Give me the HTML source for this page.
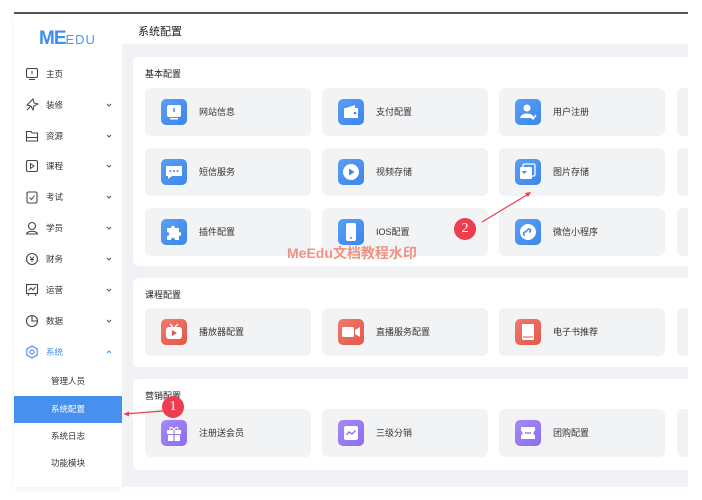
<!DOCTYPE html>
<html><head><meta charset="utf-8"><style>
*{margin:0;padding:0;box-sizing:border-box}
body{width:702px;height:500px;background:#fff;position:relative;overflow:hidden;font-family:"Liberation Sans","Noto Sans CJK SC",sans-serif;color:#333}
.topline{position:absolute;left:14px;top:12px;width:674px;height:2px;background:#555}
.side{position:absolute;left:14px;top:14px;width:108px;height:473px;background:#fff;box-shadow:0 2px 6px rgba(0,0,0,.06)}
.logo{position:absolute;left:39px;top:28px;font-size:19px;font-weight:bold;color:#3d8ef0;letter-spacing:-1px}
.logo small{font-size:13px;font-weight:normal;letter-spacing:1px;color:#4b9af5}
.mi{position:absolute;left:14px;width:108px;font-size:8.5px;color:#333;height:20px;line-height:20px}
.mi svg.ic{position:absolute;left:11px;top:3px}
.mi .t{position:absolute;left:32px}
.mi svg.ch{position:absolute;left:92px;top:8px}
.sub{position:absolute;left:14px;width:108px;text-align:center;font-size:8.5px;color:#333;height:27px;line-height:27px}
.sub.on{background:#4790ee;color:#fff}
.main{position:absolute;left:122px;top:14px;width:566px;height:473px;background:#f1f2f6}
.hdr{position:absolute;left:122px;top:14px;width:566px;height:30px;background:#fff}
.hdr span{position:absolute;left:16px;top:9px;font-size:11px;color:#222}
.panel{position:absolute;left:133px;width:560px;background:#fff;border-radius:5px}
.pt{position:absolute;left:12px;font-size:9px;color:#222}
.card{position:absolute;width:166px;height:48px;background:#f2f3f5;border-radius:6px}
.card .i{position:absolute;left:16px;top:11px;width:26px;height:26px;border-radius:5px}
.card .i svg{position:absolute;left:0;top:0}
.card .l{position:absolute;left:54px;top:17px;font-size:9px;color:#333}
.b{background:linear-gradient(135deg,#5a9ff5,#3d86ea)}
.r{background:linear-gradient(135deg,#f07a6c,#e2584a)}
.p{background:linear-gradient(135deg,#a58af6,#8d6cf0)}
.circ{position:absolute;width:22px;height:22px;border-radius:50%;background:#ee3d4e;color:#fff;font-family:"Liberation Serif",serif;font-size:14px;text-align:center;line-height:22px}
.wm{position:absolute;left:287px;top:243px;font-size:14px;font-weight:bold;color:#f08070;opacity:.85}
</style></head><body>
<div class="topline"></div>
<div class="side"></div>
<div class="logo">ME<small>EDU</small></div>

<div class="mi" style="top:64px"><svg class="ic" width="14" height="14"><rect x="1.5" y="1.5" width="11" height="9" rx="1.5" fill="none" stroke="#444" stroke-width="1.1"/><line x1="4" y1="12.5" x2="10" y2="12.5" stroke="#444" stroke-width="1.1"/><line x1="7" y1="4" x2="7" y2="7" stroke="#444" stroke-width="1.1"/></svg><span class="t">主页</span></div>
<div class="mi" style="top:95px"><svg class="ic" width="14" height="14"><path d="M2 12 L6 8 M5 4 L8 1 L9 5 L13 6 L9 8 L8 12 L6 8 L2 7Z" fill="none" stroke="#444" stroke-width="1"/></svg><span class="t">装修</span><svg class="ch" width="6" height="4"><path d="M1 1L3 3L5 1" fill="none" stroke="#555"/></svg></div>
<div class="mi" style="top:126px"><svg class="ic" width="14" height="14"><path d="M1.5 2.5H6L7 4H12.5V12H1.5Z M1.5 8.5H12.5" fill="none" stroke="#444" stroke-width="1.1"/></svg><span class="t">资源</span><svg class="ch" width="6" height="4"><path d="M1 1L3 3L5 1" fill="none" stroke="#555"/></svg></div>
<div class="mi" style="top:156px"><svg class="ic" width="14" height="14"><rect x="1.5" y="1.5" width="11" height="11" rx="1.5" fill="none" stroke="#444" stroke-width="1.1"/><path d="M5.5 4.5L9 7L5.5 9.5Z" fill="none" stroke="#444"/></svg><span class="t">课程</span><svg class="ch" width="6" height="4"><path d="M1 1L3 3L5 1" fill="none" stroke="#555"/></svg></div>
<div class="mi" style="top:187px"><svg class="ic" width="14" height="14"><rect x="2" y="2" width="10" height="11" rx="1.5" fill="none" stroke="#444" stroke-width="1.1"/><path d="M4.5 7.5L6.5 9.5L9.5 5.5" fill="none" stroke="#444"/></svg><span class="t">考试</span><svg class="ch" width="6" height="4"><path d="M1 1L3 3L5 1" fill="none" stroke="#555"/></svg></div>
<div class="mi" style="top:218px"><svg class="ic" width="14" height="14"><circle cx="7" cy="5" r="3.5" fill="none" stroke="#444" stroke-width="1.1"/><path d="M1.5 13C2 9.5 12 9.5 12.5 13Z" fill="none" stroke="#444" stroke-width="1.1"/></svg><span class="t">学员</span><svg class="ch" width="6" height="4"><path d="M1 1L3 3L5 1" fill="none" stroke="#555"/></svg></div>
<div class="mi" style="top:249px"><svg class="ic" width="14" height="14"><circle cx="7" cy="7" r="5.5" fill="none" stroke="#444" stroke-width="1.1"/><path d="M5 4.5L7 7L9 4.5M7 7V10M5 7.5H9" fill="none" stroke="#444" stroke-width=".9"/></svg><span class="t">财务</span><svg class="ch" width="6" height="4"><path d="M1 1L3 3L5 1" fill="none" stroke="#555"/></svg></div>
<div class="mi" style="top:280px"><svg class="ic" width="14" height="14"><rect x="1.5" y="1.5" width="11" height="9" fill="none" stroke="#444" stroke-width="1.1"/><path d="M3.5 7.5L6 5L8 7L10.5 4M3 13L4 10.5M11 13L10 10.5" fill="none" stroke="#444"/></svg><span class="t">运营</span><svg class="ch" width="6" height="4"><path d="M1 1L3 3L5 1" fill="none" stroke="#555"/></svg></div>
<div class="mi" style="top:311px"><svg class="ic" width="14" height="14"><circle cx="7" cy="7" r="5.5" fill="none" stroke="#444" stroke-width="1.1"/><path d="M7 1.5V7H12.5" fill="none" stroke="#444" stroke-width="1.1"/></svg><span class="t">数据</span><svg class="ch" width="6" height="4"><path d="M1 1L3 3L5 1" fill="none" stroke="#555"/></svg></div>
<div class="mi" style="top:342px;color:#3d8ef0"><svg class="ic" width="14" height="14"><path d="M7 1L12.2 4V10L7 13L1.8 10V4Z" fill="none" stroke="#3d8ef0" stroke-width="1.1"/><circle cx="7" cy="7" r="2" fill="none" stroke="#3d8ef0" stroke-width="1.1"/></svg><span class="t">系统</span><svg class="ch" width="6" height="4"><path d="M1 3L3 1L5 3" fill="none" stroke="#3d8ef0"/></svg></div>
<div class="sub" style="top:368px">管理人员</div>
<div class="sub on" style="top:396px">系统配置</div>
<div class="sub" style="top:423px">系统日志</div>
<div class="sub" style="top:450px">功能模块</div>

<div class="main"></div>
<div class="hdr"><span>系统配置</span></div>

<div class="panel" style="top:57px;height:209px">
 <div class="pt" style="top:10px">基本配置</div>
 <div class="card" style="left:12px;top:31px"><div class="i b"><svg width="26" height="26"><rect x="6" y="6" width="14" height="12" rx="2" fill="#fff"/><rect x="9" y="19" width="8" height="1.5" fill="#fff"/><rect x="12.3" y="9" width="1.4" height="4" fill="#3d86ea"/></svg></div><div class="l">网站信息</div></div>
 <div class="card" style="left:189px;top:31px"><div class="i b"><svg width="26" height="26"><path d="M6 9H20V19H6Z M8 9L17 6V9" fill="#fff"/><circle cx="17" cy="14" r="1.3" fill="#3d86ea"/></svg></div><div class="l">支付配置</div></div>
 <div class="card" style="left:366px;top:31px"><div class="i b"><svg width="26" height="26"><circle cx="12" cy="9" r="3.5" fill="#fff"/><path d="M5 19C6 13 18 13 19 19Z" fill="#fff"/><path d="M16 18L18 20L21 16" fill="none" stroke="#fff" stroke-width="1.5"/></svg></div><div class="l">用户注册</div></div>
 <div class="card" style="left:544px;top:31px"></div>
 <div class="card" style="left:12px;top:91px"><div class="i b"><svg width="26" height="26"><path d="M5 7H21V17H11L7 20V17H5Z" fill="#fff"/><circle cx="9.5" cy="12" r="1" fill="#3d86ea"/><circle cx="13" cy="12" r="1" fill="#3d86ea"/><circle cx="16.5" cy="12" r="1" fill="#3d86ea"/></svg></div><div class="l">短信服务</div></div>
 <div class="card" style="left:189px;top:91px"><div class="i b"><svg width="26" height="26"><circle cx="13" cy="13" r="8" fill="#fff"/><path d="M11 9.5L16.5 13L11 16.5Z" fill="#3d86ea"/></svg></div><div class="l">视频存储</div></div>
 <div class="card" style="left:366px;top:91px"><div class="i b"><svg width="26" height="26"><rect x="8" y="5" width="12" height="12" rx="1.5" fill="none" stroke="#fff" stroke-width="1.3"/><rect x="5" y="8" width="12" height="12" rx="1.5" fill="#fff"/><path d="M7 12H12L9 15Z" fill="#3d86ea"/></svg></div><div class="l">图片存储</div></div>
 <div class="card" style="left:544px;top:91px"></div>
 <div class="card" style="left:12px;top:151px"><div class="i b"><svg width="26" height="26"><path d="M6 9H10C10 6 14 6 14 9H18V13C21 13 21 17 18 17V21H14C14 18 10 18 10 21H6V17C9 17 9 13 6 13Z" fill="#fff"/></svg></div><div class="l">插件配置</div></div>
 <div class="card" style="left:189px;top:151px"><div class="i b"><svg width="26" height="26"><rect x="8" y="4" width="10" height="18" rx="2" fill="#fff"/><circle cx="13" cy="19" r="1" fill="#3d86ea"/></svg></div><div class="l">IOS配置</div></div>
 <div class="card" style="left:366px;top:151px"><div class="i b"><svg width="26" height="26"><circle cx="13" cy="13" r="8" fill="#fff"/><path d="M10 16C8 16 8 13 10 13C12 13 12 10 14 10C16 10 16 13 14 13" fill="none" stroke="#3d86ea" stroke-width="1.5"/></svg></div><div class="l">微信小程序</div></div>
 <div class="card" style="left:544px;top:151px"></div>
</div>

<div class="panel" style="top:278px;height:89px">
 <div class="pt" style="top:10px">课程配置</div>
 <div class="card" style="left:12px;top:30px"><div class="i r"><svg width="26" height="26"><rect x="5" y="8" width="16" height="12" rx="3" fill="#fff"/><path d="M9 5L12 8M17 5L14 8" stroke="#fff" stroke-width="1.3"/><path d="M11 11L16 14L11 17Z" fill="#e2584a"/></svg></div><div class="l">播放器配置</div></div>
 <div class="card" style="left:189px;top:30px"><div class="i r"><svg width="26" height="26"><rect x="4" y="8" width="12" height="10" rx="1.5" fill="#fff"/><path d="M17 11L22 8V18L17 15Z" fill="#fff"/></svg></div><div class="l">直播服务配置</div></div>
 <div class="card" style="left:366px;top:30px"><div class="i r"><svg width="26" height="26"><rect x="7" y="5" width="12" height="16" rx="1.5" fill="#fff"/><line x1="8" y1="18" x2="18" y2="18" stroke="#e2584a"/></svg></div><div class="l">电子书推荐</div></div>
 <div class="card" style="left:544px;top:30px"></div>
</div>

<div class="panel" style="top:379px;height:91px">
 <div class="pt" style="top:10px">营销配置</div>
 <div class="card" style="left:12px;top:30px"><div class="i p"><svg width="26" height="26"><rect x="6" y="10" width="14" height="4" fill="#fff"/><rect x="7" y="15" width="12" height="6" fill="#fff"/><path d="M13 10C11 6 8 7 9.5 9.5M13 10C15 6 18 7 16.5 9.5" fill="none" stroke="#fff" stroke-width="1.2"/><line x1="13" y1="10" x2="13" y2="21" stroke="#9a7cf3" stroke-width="1.2"/></svg></div><div class="l">注册送会员</div></div>
 <div class="card" style="left:189px;top:30px"><div class="i p"><svg width="26" height="26"><rect x="6" y="6" width="14" height="14" rx="2" fill="#fff"/><path d="M8.5 15L11 12L14 14L17.5 10.5" fill="none" stroke="#8d6cf0" stroke-width="1.3"/></svg></div><div class="l">三级分销</div></div>
 <div class="card" style="left:366px;top:30px"><div class="i p"><svg width="26" height="26"><path d="M6 7H20V11C18 11 18 15 20 15V19H6V15C8 15 8 11 6 11Z" fill="#fff"/><line x1="10" y1="13" x2="16" y2="13" stroke="#8d6cf0" stroke-width="1.3"/></svg></div><div class="l">团购配置</div></div>
 <div class="card" style="left:544px;top:30px"></div>
</div>

<div style="position:absolute;left:688px;top:14px;width:14px;height:486px;background:#fff"></div>

<svg style="position:absolute;left:0;top:0" width="702" height="500">
 <line x1="163" y1="411" x2="124" y2="414" stroke="#e8404f" stroke-width="1.2"/>
 <path d="M124 414 L129 411.5 L129 416.5Z" fill="#e8404f"/>
 <line x1="482" y1="222" x2="530" y2="193" stroke="#e8404f" stroke-width="1.2"/>
 <path d="M531 192 L525 193 L528 197Z" fill="#e8404f"/>
</svg>
<div class="circ" style="left:162px;top:396px">1</div>
<div class="circ" style="left:454px;top:218px">2</div>
<div class="wm">MeEdu文档教程水印</div>
</body></html>
